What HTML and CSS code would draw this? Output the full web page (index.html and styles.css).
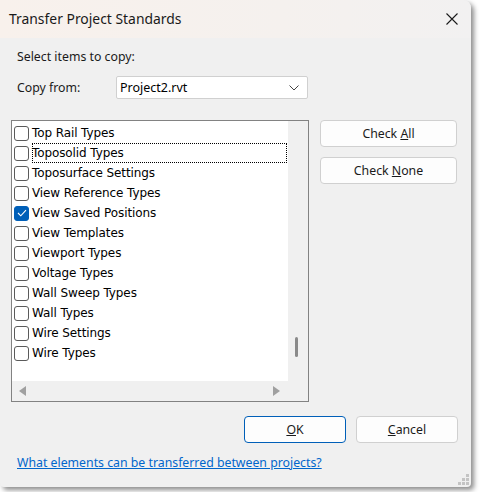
FILE: index.html
```html
<!DOCTYPE html>
<html>
<head>
<meta charset="utf-8">
<link rel="stylesheet" href="styles.css">
</head>
<body>
<div class="window">
  <div class="titlebar">
    <span class="title">Transfer Project Standards</span>
    <svg class="close" width="12" height="12" viewBox="0 0 12 12"><path d="M0.5 0.5 L11.5 11.5 M11.5 0.5 L0.5 11.5" stroke="#1a1a1a" stroke-width="1.1" fill="none"/></svg>
  </div>
  <div class="content">
    <div class="label">Select items to copy:</div>
    <div class="from-row">
      <span class="from-label">Copy from:</span>
      <div class="select">
        <span>Project2.rvt</span>
        <svg width="10" height="6" viewBox="0 0 10 6"><path d="M0.5 0.5 L5 5 L9.5 0.5" stroke="#444" stroke-width="1" fill="none"/></svg>
      </div>
    </div>
    <div class="main">
      <div class="listbox">
        <div class="list-area">
          <div class="items">
            <div class="item"><span class="cb"></span><span class="txt">Top Rail Types</span></div>
            <div class="item focus"><span class="cb"></span><span class="txt">Toposolid Types</span></div>
            <div class="item"><span class="cb"></span><span class="txt">Toposurface Settings</span></div>
            <div class="item"><span class="cb"></span><span class="txt">View Reference Types</span></div>
            <div class="item"><span class="cb checked"><svg width="10" height="8" viewBox="0 0 10 8"><path d="M1 4 L3.8 6.8 L9 1.2" stroke="#fff" stroke-width="1.1" fill="none"/></svg></span><span class="txt">View Saved Positions</span></div>
            <div class="item"><span class="cb"></span><span class="txt">View Templates</span></div>
            <div class="item"><span class="cb"></span><span class="txt">Viewport Types</span></div>
            <div class="item"><span class="cb"></span><span class="txt">Voltage Types</span></div>
            <div class="item"><span class="cb"></span><span class="txt">Wall Sweep Types</span></div>
            <div class="item"><span class="cb"></span><span class="txt">Wall Types</span></div>
            <div class="item"><span class="cb"></span><span class="txt">Wire Settings</span></div>
            <div class="item"><span class="cb"></span><span class="txt">Wire Types</span></div>
          </div>
          <div class="vscroll"><div class="thumb"></div></div>
        </div>
        <div class="hscroll">
          <div class="hbar">
            <svg width="8" height="10" viewBox="0 0 8 10"><path d="M7 0 L7 10 L0 5 Z" fill="#a0a0a0"/></svg>
            <svg width="8" height="10" viewBox="0 0 8 10"><path d="M1 0 L1 10 L8 5 Z" fill="#a0a0a0"/></svg>
          </div>
          <div class="corner"></div>
        </div>
      </div>
      <div class="side">
        <div class="btn"><span>Check <u>A</u>ll</span></div>
        <div class="btn"><span>Check <u>N</u>one</span></div>
      </div>
    </div>
    <div class="actions">
      <div class="btn wide default"><span><u>O</u>K</span></div>
      <div class="btn wide"><span><u>C</u>ancel</span></div>
    </div>
    <a class="link" href="#">What elements can be transferred between projects?</a>
  </div>
  <div class="grip">
    <svg width="12" height="12" viewBox="0 0 12 12" fill="#c4c4c4">
      <rect x="8" y="0" width="3" height="3"/>
      <rect x="4" y="4" width="3" height="3"/><rect x="8" y="4" width="3" height="3"/>
      <rect x="0" y="8" width="3" height="3"/><rect x="4" y="8" width="3" height="3"/><rect x="8" y="8" width="3" height="3"/>
    </svg>
  </div>
</div>
</body>
</html>
```
FILE: styles.css
```css
html, body {
  margin: 0;
  padding: 0;
  background: #ffffff;
}
body {
  width: 481px;
  height: 492px;
  overflow: hidden;
  font-family: "Noto Sans", "Open Sans", sans-serif;
  color: #000;
}
.window {
  position: relative;
  width: 471px;
  height: 487px;
  background: #f0f0f0;
  border-top-right-radius: 8px;
  border-bottom-right-radius: 4px;
  border-bottom-left-radius: 4px;
  box-shadow: 3px 3px 5px rgba(0,0,0,0.45);
  display: flex;
  flex-direction: column;
}
.titlebar {
  height: 38px;
  flex: none;
  display: flex;
  align-items: center;
  justify-content: space-between;
  padding: 0 13px 0 9px;
  background: linear-gradient(90deg, #f8f1ec 0%, #f5f1ee 60%, #f2f1f1 100%);
  border-top-right-radius: 8px;
}
.title {
  font-size: 13.9px;
  color: #1a1a1a;
  padding-bottom: 1px;
}
.close { display: block; }
.content {
  flex: 1;
  padding: 11px 13px 0 11px;
  display: flex;
  flex-direction: column;
}
.label {
  font-size: 12.3px;
  line-height: 16px;
  padding-left: 6px;
  color: #1a1a1a;
}
.from-row {
  margin-top: 11px;
  display: flex;
  align-items: center;
  height: 23px;
}
.from-label {
  font-size: 12.3px;
  width: 99px;
  padding-left: 6px;
  color: #1a1a1a;
}
.select {
  width: 179px;
  height: 21px;
  background: #fff;
  border: 1px solid #d0d0d0;
  border-radius: 2px;
  display: flex;
  align-items: center;
  justify-content: space-between;
  padding: 0 8px 0 3px;
  font-size: 12.5px;
  color: #000;
}
.main {
  margin-top: 21px;
  display: flex;
  gap: 11px;
}
.listbox {
  width: 296px;
  height: 280px;
  border: 1px solid #828282;
  background: #fff;
  display: flex;
  flex-direction: column;
}
.list-area {
  flex: 1;
  display: flex;
  min-height: 0;
}
.items {
  flex: 1;
  padding-top: 2px;
  font-family: "DejaVu Sans", Verdana, sans-serif;
  font-size: 12px;
}
.item {
  height: 20px;
  display: flex;
  align-items: center;
  padding-left: 2px;
  box-sizing: border-box;
}
.item.focus .txt {
  outline: 1px dotted #000;
  outline-offset: -1px;
  flex: 1;
  margin-right: 1px;
}
.cb {
  width: 13px;
  height: 13px;
  border: 1px solid #5a5a5a;
  border-radius: 3px;
  box-sizing: content-box;
  flex: none;
  display: flex;
  align-items: center;
  justify-content: center;
  background: #fff;
}
.cb.checked {
  background: #005fb8;
  border-color: #005fb8;
}
.txt {
  margin-left: 3px;
  height: 20px;
  line-height: 20px;
  color: #000;
  white-space: nowrap;
  letter-spacing: -0.1px;
}
.vscroll {
  width: 20px;
  background: #f0f0f0;
  position: relative;
}
.thumb {
  position: absolute;
  left: 7px;
  top: 216px;
  width: 3px;
  height: 20px;
  border-radius: 2px;
  background: #8a8a8a;
}
.hscroll {
  height: 20px;
  display: flex;
  background: #f0f0f0;
}
.hbar {
  flex: 1;
  display: flex;
  align-items: center;
  justify-content: space-between;
  padding: 0 8px 0 7px;
}
.hbar svg { display: block; }
.corner {
  width: 20px;
  background: #f0f0f0;
}
.side {
  display: flex;
  flex-direction: column;
  gap: 10px;
}
.btn {
  width: 135px;
  height: 25px;
  border: 1px solid #d0d0d0;
  border-radius: 4px;
  background: #fdfdfd;
  display: flex;
  align-items: center;
  justify-content: center;
  font-size: 12.3px;
  color: #1a1a1a;
}
.actions {
  margin-top: 14px;
  display: flex;
  justify-content: flex-end;
  gap: 10px;
}
.btn.wide {
  width: 100px;
}
.btn.default {
  border-color: #005fb8;
}
.link {
  margin-top: 11px;
  margin-left: 6px;
  font-size: 12.3px;
  color: #0066cc;
  text-decoration: underline;
}
.grip {
  position: absolute;
  right: 1px;
  bottom: 1px;
  line-height: 0;
}
```
